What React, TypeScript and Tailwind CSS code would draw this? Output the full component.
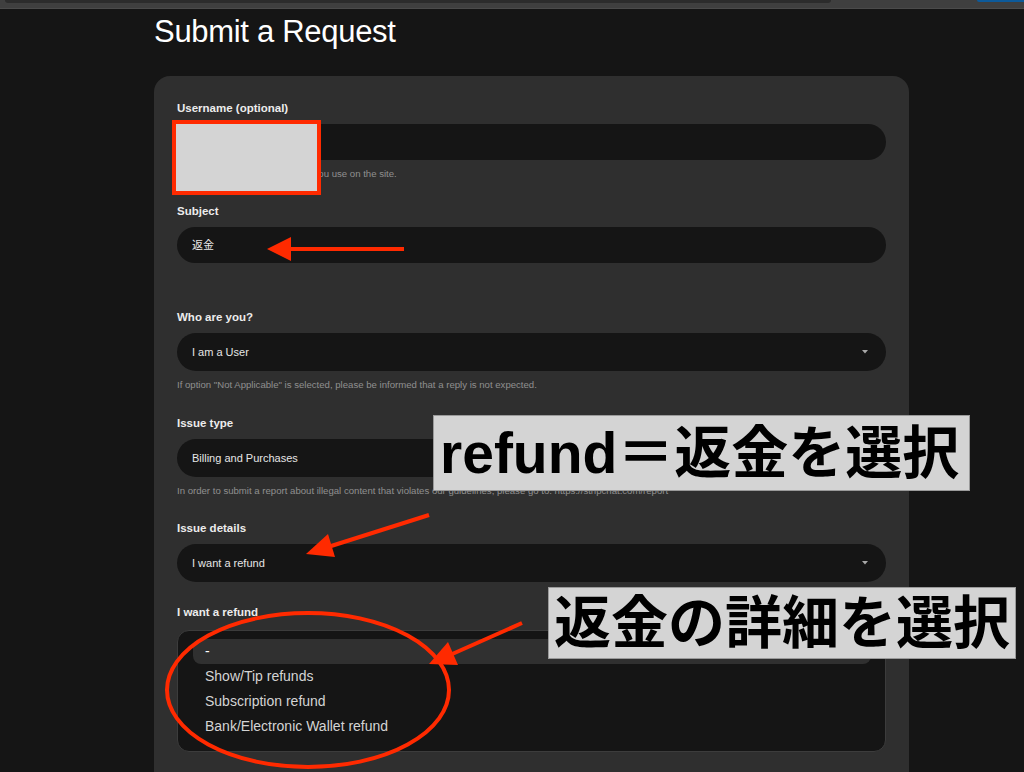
const font = "font-['Liberation_Sans','Noto_Sans_CJK_JP',sans-serif]";

function Caret() {
    return (
        <svg width="6" height="4" viewBox="0 0 6 4" className="shrink-0">
            <path d="M0 0h6L3 3.5z" fill="#a8a8a8" />
        </svg>
    )
}

function Label({ children }: { children: React.ReactNode }) {
    return <div className="text-[11.5px] font-bold leading-[16px] text-[#ececec]">{children}</div>
}

function Helper({ children, tall }: { children?: React.ReactNode, tall?: boolean }) {
    return (
        <div className={tall
            ? "mt-[8px] h-[14px] truncate text-[9.6px] leading-[12px] text-[#8f8f8f]"
            : "mt-[8px] h-[12px] truncate text-[9.6px] leading-[12px] text-[#8f8f8f]"}>
            {children}
        </div>
    )
}

function Select({ value }: { value: string }) {
    return (
        <div className="mt-[8px] flex h-[38px] items-center justify-between rounded-full bg-[#151515] pl-[15px] pr-[18px] text-[11px] text-[#e6e6e6]">
            <span>{value}</span>
            <Caret />
        </div>
    )
}

function Input({ value }: { value?: string }) {
    return (
        <div className="mt-[8px] flex h-[36px] items-center rounded-full bg-[#151515] pl-[15px] text-[11px] text-[#e6e6e6]">
            {value}
        </div>
    )
}

const options = ["-", "Show/Tip refunds", "Subscription refund", "Bank/Electronic Wallet refund"];

export default function App() {
    return (
        <div className={`relative min-h-screen overflow-hidden bg-[#151515] ${font}`}>
            {/* browser chrome strip */}
            <div className="flex h-[9px] items-start justify-between border-b border-[#4b4b4b] bg-[#3f3f3f]">
                <div className="ml-[5px] h-[3px] w-[826px] rounded-b-[6px] bg-[#2c2c2c]" />
                <div className="h-[2px] w-[47px] rounded-bl-[6px] bg-[#0d5a9a]" />
            </div>

            <div className="ml-[154px] w-[755px]">
                <h1 className="mt-[5px] text-[31px] leading-[36px] tracking-[-0.3px] text-white">Submit a Request</h1>

                <div className="mt-[26px] rounded-[16px] bg-[#2f2f2f] px-[23px] pb-[60px] pt-[24px]">
                    <Label>Username (optional)</Label>
                    <Input />
                    <Helper>Please enter the username that you use on the site.</Helper>

                    <div className="mt-[23px]">
                        <Label>Subject</Label>
                        <Input value="返金" />
                        <Helper tall />
                    </div>

                    <div className="mt-[24px]">
                        <Label>Who are you?</Label>
                        <Select value="I am a User" />
                        <Helper>If option "Not Applicable" is selected, please be informed that a reply is not expected.</Helper>
                    </div>

                    <div className="mt-[24px]">
                        <Label>Issue type</Label>
                        <Select value="Billing and Purchases" />
                        <Helper>In order to submit a report about illegal content that violates our guidelines, please go to: https://stripchat.com/report</Helper>
                    </div>

                    <div className="mt-[23px]">
                        <Label>Issue details</Label>
                        <Select value="I want a refund" />
                    </div>

                    <div className="mt-[22px]">
                        <Label>I want a refund</Label>
                        <div className="mt-[10px] rounded-[12px] border border-[#3c3c3c] bg-[#151515] pb-[12px] pl-[15px] pr-[14px] pt-[8px]">
                            {options.map((o, i) => (
                                <div
                                    key={o}
                                    className={i === 0
                                        ? "flex h-[25px] items-center rounded-[8px] bg-[#303030] pl-[12px] text-[14px] text-white"
                                        : "flex h-[25px] items-center pl-[12px] text-[14px] text-[#d4d4d4]"}
                                >
                                    {o}
                                </div>
                            ))}
                        </div>
                    </div>
                </div>
            </div>

            {/* annotations */}
            <div className="absolute left-[172px] top-[120px] h-[75px] w-[149px] border-[4px] border-[#ff2a00] bg-[#d4d4d4]" />

            <svg className="pointer-events-none absolute left-0 top-0" width="1024" height="772">
                <g fill="#ff2a00" stroke="#ff2a00" strokeWidth="4">
                    <line x1="404" y1="249" x2="288" y2="249" />
                    <polygon points="267,249 291,237 291,261" strokeWidth="0" />
                    <line x1="429" y1="515" x2="328" y2="547" />
                    <polygon points="306,554 335,557 328,534" strokeWidth="0" />
                    <line x1="522" y1="623" x2="450" y2="655" />
                    <polygon points="429,664 458,665 448,642" strokeWidth="0" />
                </g>
                <ellipse cx="308" cy="690" rx="141" ry="77" fill="none" stroke="#ff2a00" strokeWidth="4" />
            </svg>

            <div className="absolute left-[433px] top-[415px] flex h-[76px] w-[537px] items-center border border-[#9a9a9a] bg-[#d4d4d4] pl-[6px] text-[57px] font-bold leading-none text-black">
                refund＝返金を選択
            </div>
            <div className="absolute left-[548px] top-[587px] flex h-[72px] w-[468px] items-center justify-center border border-[#9a9a9a] bg-[#d4d4d4] text-[57px] font-bold leading-none text-black">
                返金の詳細を選択
            </div>
        </div>
    )
}
